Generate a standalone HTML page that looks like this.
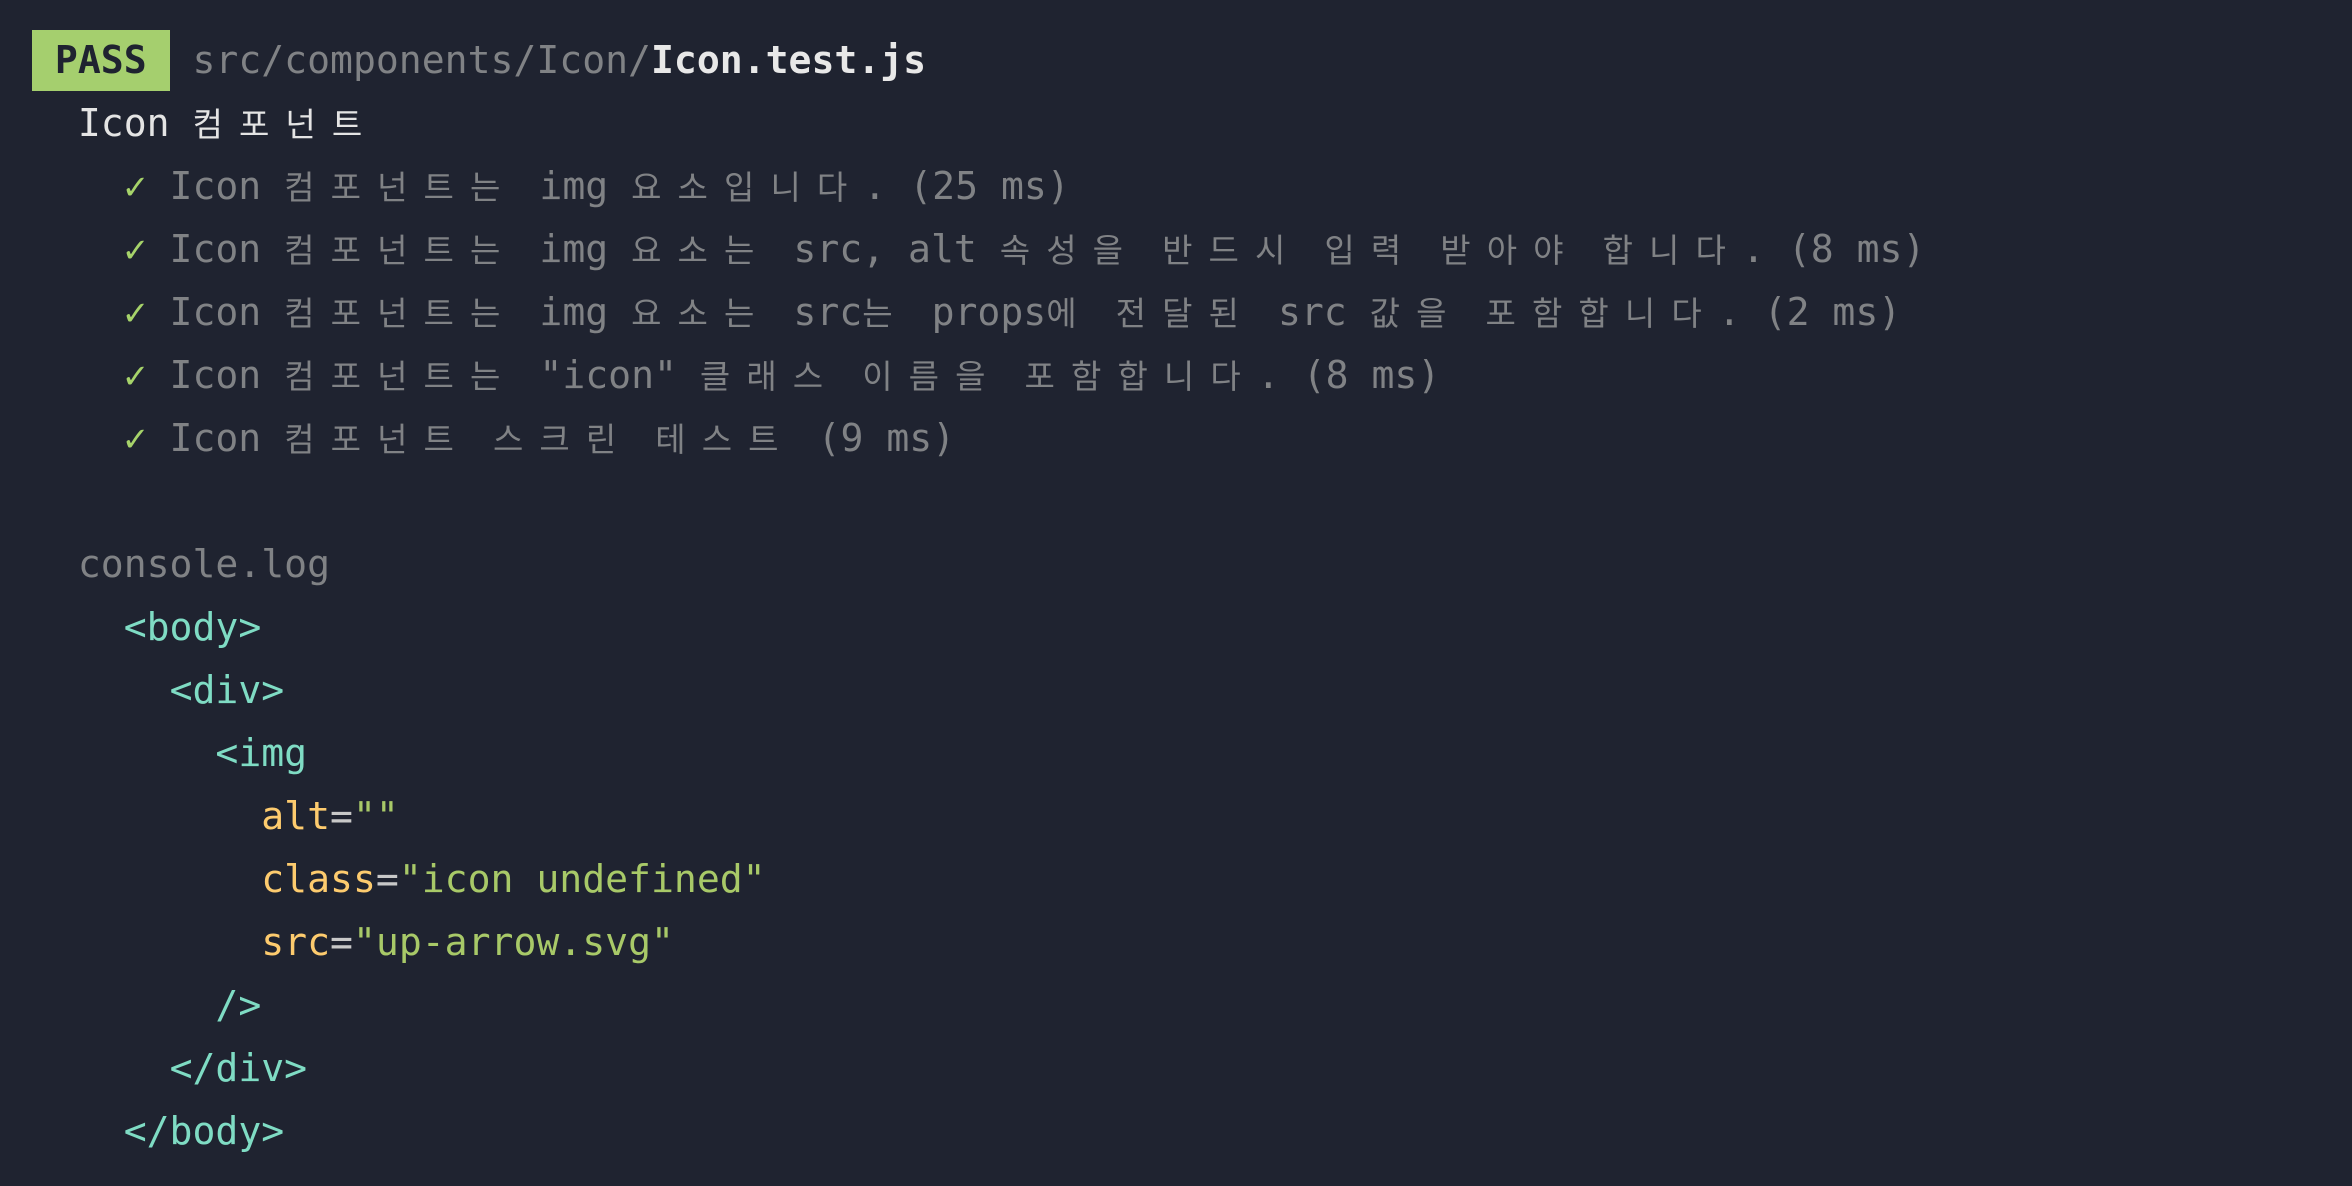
<!DOCTYPE html>
<html><head><meta charset="utf-8"><style>
html,body{margin:0;padding:0;background:#1f2330;width:2352px;height:1186px;overflow:hidden}
.p{position:absolute;left:32px;top:29px;font-family:"DejaVu Sans Mono","Liberation Mono",monospace;font-size:38.1px;color:#808285}
.l{height:63px;line-height:63px;white-space:pre}
.k{font-family:"Noto Sans CJK KR","NanumGothic",sans-serif;font-size:33px;letter-spacing:16.1px;line-height:0}
.pass{background:#a5cf6e;color:#1f2330;font-weight:bold;display:inline-block;line-height:61px;vertical-align:top;margin-top:1px}
.w{color:#e4e4e4}
.b{color:#e8e8e8;font-weight:bold}
.c{color:#a6d36a;display:inline-block;width:22.9px;font-size:38px}
.t{color:#7fdcc4}
.y{color:#fdcb6e}
.g{color:#a8c968}
.e{color:#c8c8c8}
</style></head><body><div class="p"><div class="l"><span class="pass"> PASS </span> src/components/Icon/<span class="b">Icon.test.js</span></div><div class="l"><span class="w">  Icon <span class="k">컴포넌트</span></span></div><div class="l">    <span class="c">✓</span> Icon <span class="k">컴포넌트는</span> img <span class="k">요소입니다</span>. (25 ms)</div><div class="l">    <span class="c">✓</span> Icon <span class="k">컴포넌트는</span> img <span class="k">요소는</span> src, alt <span class="k">속성을</span> <span class="k">반드시</span> <span class="k">입력</span> <span class="k">받아야</span> <span class="k">합니다</span>. (8 ms)</div><div class="l">    <span class="c">✓</span> Icon <span class="k">컴포넌트는</span> img <span class="k">요소는</span> src<span class="k">는</span> props<span class="k">에</span> <span class="k">전달된</span> src <span class="k">값을</span> <span class="k">포함합니다</span>. (2 ms)</div><div class="l">    <span class="c">✓</span> Icon <span class="k">컴포넌트는</span> "icon" <span class="k">클래스</span> <span class="k">이름을</span> <span class="k">포함합니다</span>. (8 ms)</div><div class="l">    <span class="c">✓</span> Icon <span class="k">컴포넌트</span> <span class="k">스크린</span> <span class="k">테스트</span> (9 ms)</div><div class="l"> </div><div class="l">  console.log</div><div class="l">    <span class="t">&lt;body&gt;</span></div><div class="l">      <span class="t">&lt;div&gt;</span></div><div class="l">        <span class="t">&lt;img</span></div><div class="l">          <span class="y">alt</span><span class="e">=</span><span class="g">""</span></div><div class="l">          <span class="y">class</span><span class="e">=</span><span class="g">"icon undefined"</span></div><div class="l">          <span class="y">src</span><span class="e">=</span><span class="g">"up-arrow.svg"</span></div><div class="l">        <span class="t">/&gt;</span></div><div class="l">      <span class="t">&lt;/div&gt;</span></div><div class="l">    <span class="t">&lt;/body&gt;</span></div></div></body></html>
